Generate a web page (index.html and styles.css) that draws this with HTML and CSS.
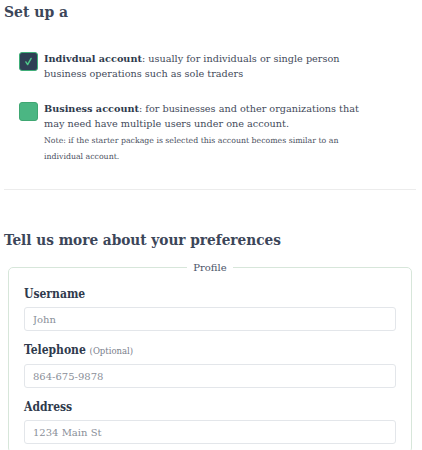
FILE: index.html
```html
<!DOCTYPE html>
<html>
<head>
<meta charset="utf-8">
<link rel="stylesheet" href="styles.css">
</head>
<body>
<div class="page">
  <h2 class="title">Set up a</h2>
  <div class="options">
    <div class="option">
      <span class="box box-checked">
        <svg width="11" height="11" viewBox="0 0 10 10"><path d="M2.6 5.4 L4.2 7.8 L7.4 2.2" fill="none" stroke="#4fc88a" stroke-width="1.3" stroke-linecap="round" stroke-linejoin="round"/></svg>
      </span>
      <div class="option-text">
        <p class="desc"><b>Indivdual account</b>: usually for individuals or single person business operations such as sole traders</p>
      </div>
    </div>
    <div class="option">
      <span class="box box-green"></span>
      <div class="option-text">
        <p class="desc"><b>Business account</b>: for businesses and other organizations that may need have multiple users under one account.</p>
        <p class="note">Note: if the starter package is selected this account becomes similar to an individual account.</p>
      </div>
    </div>
  </div>
  <hr class="divider">
  <h2 class="title title-2">Tell us more about your preferences</h2>
  <fieldset class="profile">
    <legend>Profile</legend>
    <label class="field">
      <span class="label">Username</span>
      <input class="input" placeholder="John">
    </label>
    <label class="field">
      <span class="label">Telephone <span class="optional">(Optional)</span></span>
      <input class="input" placeholder="864-675-9878">
    </label>
    <label class="field">
      <span class="label">Address</span>
      <input class="input" placeholder="1234 Main St">
    </label>
  </fieldset>
</div>
</body>
</html>
```

FILE: styles.css
```css
* { box-sizing: border-box; }
body {
  margin: 0;
  background: #fff;
  font-family: "DejaVu Serif", "Liberation Serif", serif;
  color: #3f4757;
}
.page {
  padding: 0 6px 0 4px;
}
.title {
  margin: 0;
  padding-top: 0;
  font-family: "DejaVu Serif Condensed", "DejaVu Serif", serif;
  font-stretch: condensed;
  font-size: 15.5px;
  line-height: 24px;
  font-weight: bold;
  color: #3c4659;
}
.options {
  padding: 27px 0 0 15px;
}
.option {
  display: flex;
  gap: 6px;
  margin-bottom: 20px;
}
.box {
  flex: none;
  width: 19px;
  height: 19px;
  border-radius: 3px;
  margin-top: 1px;
  display: flex;
  align-items: center;
  justify-content: center;
}
.box-checked {
  background: #2f3f54;
  border: 1.5px solid #3fae78;
}
.box-green {
  background: #4bb683;
  border: 1px solid #3fa772;
}
.option-text {
  max-width: 326px;
}
.desc {
  margin: 0;
  font-size: 9.7px;
  line-height: 15px;
  color: #434a5a;
}
.desc b { color: #2f3a4d; }
.note {
  margin: 2px 0 0;
  font-size: 7.8px;
  line-height: 16px;
  color: #4a5060;
}
.divider {
  border: 0;
  border-top: 1px solid #ececec;
  margin: 24px 0 0;
}
.title-2 {
  margin-top: 38px;
  font-size: 15.2px;
  line-height: 24px;
}
.profile {
  margin: 10px 4px 0 4px;
  border: 1px solid #d7e6da;
  border-radius: 5px;
  padding: 10px 15px 0 15px;
  min-width: 0;
}
.profile legend {
  margin: 0 auto;
  padding: 0 6px;
  font-size: 10px;
  color: #4a5468;
}
.field {
  display: block;
  margin-bottom: 8px;
}
.label {
  display: block;
  font-family: "DejaVu Serif Condensed", "DejaVu Serif", serif;
  font-stretch: condensed;
  font-size: 12px;
  font-weight: bold;
  line-height: 22px;
  color: #2f3a4d;
  margin-bottom: 2px;
}
.optional {
  font-family: "DejaVu Serif", serif;
  font-stretch: normal;
  font-weight: normal;
  font-size: 8.5px;
  color: #7a808c;
}
.input {
  display: block;
  width: 100%;
  height: 24px;
  border: 1px solid #e3e6ea;
  border-radius: 3px;
  padding: 0 8px;
  font-family: inherit;
  font-size: 10px;
  background: #fff;
}
.input::placeholder { color: #8a8f99; }
```
